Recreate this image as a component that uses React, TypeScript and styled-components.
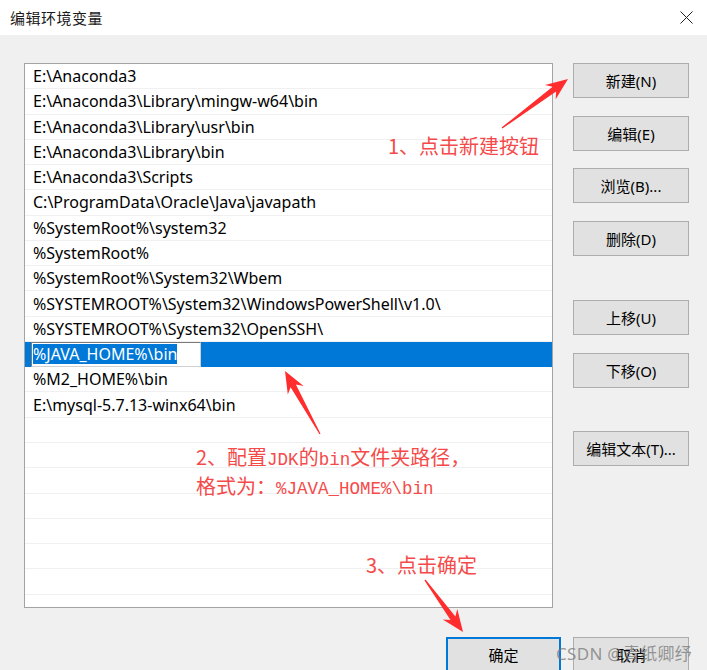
import React from "react";
import styled, { createGlobalStyle } from "styled-components";

const UI_FONT = `"Noto Sans", "Noto Sans CJK SC", sans-serif`;
const NOTE_FONT = `"Noto Sans CJK SC", sans-serif`;

const Global = createGlobalStyle`
  html, body { margin: 0; padding: 0; }
  body {
    width: 707px;
    height: 670px;
    overflow: hidden;
    background: #f0f0f0;
    font-family: ${UI_FONT};
  }
`;

const Window = styled.div`
  position: relative;
  width: 707px;
  height: 670px;
  overflow: hidden;
  background: #f0f0f0;
  display: flex;
  flex-direction: column;
`;

const TitleBar = styled.div`
  height: 35px;
  flex: none;
  background: #ffffff;
  display: flex;
  align-items: center;
  justify-content: space-between;
  padding: 0 14px 0 10px;
`;

const Title = styled.div`
  font-family: "Noto Sans CJK SC", sans-serif;
  font-size: 15px;
  color: #1a1a1a;
  letter-spacing: 0.5px;
`;

const CloseIcon = styled.svg`
  width: 13px;
  height: 13px;
  display: block;
`;

const Body = styled.div`
  display: flex;
  align-items: flex-start;
  gap: 20px;
  padding: 28px 17px 0 24px;
`;

const ListBox = styled.div`
  width: 529px;
  height: 545px;
  box-sizing: border-box;
  border: 1px solid #a3a3a3;
  background: #ffffff;
  overflow: hidden;
  flex: none;
`;

const Row = styled.div<{ $selected?: boolean }>`
  height: 25.27px;
  box-sizing: border-box;
  border-bottom: 1px solid #f0f0f0;
  display: flex;
  align-items: center;
  padding-left: ${(p) => (p.$selected ? "6px" : "8px")};
  font-size: 16px;
  color: #000;
  white-space: nowrap;
  background: ${(p) => (p.$selected ? "#0078d7" : "#ffffff")};
  border-bottom-color: ${(p) => (p.$selected ? "#0078d7" : "#f0f0f0")};
`;

const EditBox = styled.div`
  width: 170px;
  height: 25px;
  box-sizing: border-box;
  background: #ffffff;
  border: 1px solid #7a7a7a;
  border-right-color: #d0d0d0;
  border-bottom-color: #d0d0d0;
  display: flex;
  align-items: center;
  padding-left: 1px;
`;

const Highlight = styled.span`
  background: #0078d7;
  color: #ffffff;
  line-height: 20px;
`;

const ButtonColumn = styled.div`
  display: flex;
  flex-direction: column;
  width: 116px;
  flex: none;
`;

const SideButton = styled.div<{ $space: number }>`
  height: 35px;
  box-sizing: border-box;
  margin-top: ${(p) => p.$space}px;
  background: #e1e1e1;
  border: 1px solid #adadad;
  display: flex;
  align-items: center;
  justify-content: center;
  font-size: 15px;
  color: #000;
`;

const Footer = styled.div`
  display: flex;
  justify-content: flex-end;
  gap: 12px;
  padding: 29px 18px 0 0;
`;

const DialogButton = styled.div<{ $default?: boolean }>`
  width: ${(p) => (p.$default ? "115px" : "116px")};
  height: 35px;
  box-sizing: border-box;
  background: #e1e1e1;
  border: ${(p) => (p.$default ? "2px solid #0078d7" : "1px solid #adadad")};
  display: flex;
  align-items: center;
  justify-content: center;
  font-size: 15px;
  color: #000;
`;

const Watermark = styled.div`
  position: absolute;
  left: 556px;
  top: 640px;
  font-family: "Noto Sans", "Noto Sans CJK SC", sans-serif;
  font-size: 17px;
  color: rgba(120, 120, 120, 0.75);
  white-space: nowrap;
  letter-spacing: 0.3px;
`;

const Overlay = styled.svg`
  position: absolute;
  left: 0;
  top: 0;
  width: 707px;
  height: 670px;
  pointer-events: none;
`;

const Note = styled.div<{ $x: number; $y: number }>`
  position: absolute;
  left: ${(p) => p.$x}px;
  top: ${(p) => p.$y}px;
  font-family: ${NOTE_FONT};
  font-size: 20px;
  line-height: 26px;
  color: #f54a4a;
  white-space: nowrap;
`;

const Mono = styled.span`
  font-family: "Liberation Mono", monospace;
  font-size: 17.5px;
`;

type Pt = [number, number];

function arrowPoints(tail: Pt, tip: Pt): string {
  const dx = tip[0] - tail[0];
  const dy = tip[1] - tail[1];
  const L = Math.hypot(dx, dy);
  const ux = dx / L;
  const uy = dy / L;
  const nx = -uy;
  const ny = ux;
  const head = 22;
  const neckW = 3;
  const headW = 9;
  const tailW = 0.6;
  const bx = tip[0] - ux * head;
  const by = tip[1] - uy * head;
  const nbx = tip[0] - ux * (head - 5);
  const nby = tip[1] - uy * (head - 5);
  const pts: Pt[] = [
    [tail[0] + nx * tailW, tail[1] + ny * tailW],
    [nbx + nx * neckW, nby + ny * neckW],
    [bx + nx * headW, by + ny * headW],
    [tip[0], tip[1]],
    [bx - nx * headW, by - ny * headW],
    [nbx - nx * neckW, nby - ny * neckW],
    [tail[0] - nx * tailW, tail[1] - ny * tailW],
  ];
  return pts.map((p) => `${p[0].toFixed(1)},${p[1].toFixed(1)}`).join(" ");
}

const paths = [
  "E:\\Anaconda3",
  "E:\\Anaconda3\\Library\\mingw-w64\\bin",
  "E:\\Anaconda3\\Library\\usr\\bin",
  "E:\\Anaconda3\\Library\\bin",
  "E:\\Anaconda3\\Scripts",
  "C:\\ProgramData\\Oracle\\Java\\javapath",
  "%SystemRoot%\\system32",
  "%SystemRoot%",
  "%SystemRoot%\\System32\\Wbem",
  "%SYSTEMROOT%\\System32\\WindowsPowerShell\\v1.0\\",
  "%SYSTEMROOT%\\System32\\OpenSSH\\",
  "__EDIT__",
  "%M2_HOME%\\bin",
  "E:\\mysql-5.7.13-winx64\\bin",
];

const TOTAL_ROWS = 22;

const sideButtons: { label: string; space: number }[] = [
  { label: "新建(N)", space: 0 },
  { label: "编辑(E)", space: 17.7 },
  { label: "浏览(B)...", space: 17.7 },
  { label: "删除(D)", space: 17.7 },
  { label: "上移(U)", space: 43.9 },
  { label: "下移(O)", space: 17.7 },
  { label: "编辑文本(T)...", space: 43.3 },
];

export default function App() {
  const rows = Array.from({ length: TOTAL_ROWS }, (_, i) => paths[i] ?? "");
  return (
    <Window>
      <Global />
      <TitleBar>
        <Title>编辑环境变量</Title>
        <CloseIcon viewBox="0 0 13 13">
          <path d="M0.5 0.5 L12.5 12.5 M12.5 0.5 L0.5 12.5" stroke="#222" strokeWidth="1" fill="none" />
        </CloseIcon>
      </TitleBar>
      <Body>
        <ListBox>
          {rows.map((text, i) =>
            text === "__EDIT__" ? (
              <Row key={i} $selected>
                <EditBox>
                  <Highlight>%JAVA_HOME%\bin</Highlight>
                </EditBox>
              </Row>
            ) : (
              <Row key={i}>{text}</Row>
            )
          )}
        </ListBox>
        <ButtonColumn>
          {sideButtons.map((b) => (
            <SideButton key={b.label} $space={b.space}>
              {b.label}
            </SideButton>
          ))}
        </ButtonColumn>
      </Body>
      <Footer>
        <DialogButton $default>确定</DialogButton>
        <DialogButton>取消</DialogButton>
      </Footer>
      <Watermark>CSDN @青纸卿纾</Watermark>
      <Overlay viewBox="0 0 707 670">
        <polygon points={arrowPoints([502, 128], [568, 79])} fill="#ff2d2d" />
        <polygon points={arrowPoints([320, 434], [285, 371])} fill="#ff2d2d" />
        <polygon points={arrowPoints([425, 580], [463, 632])} fill="#ff2d2d" />
      </Overlay>
      <Note $x={388} $y={133}>1、点击新建按钮</Note>
      <Note $x={196} $y={444}>
        2、配置<Mono>JDK</Mono>的<Mono>bin</Mono>文件夹路径，
        <br />
        格式为：<Mono>%JAVA_HOME%\bin</Mono>
      </Note>
      <Note $x={366} $y={552}>3、点击确定</Note>
    </Window>
  );
}
